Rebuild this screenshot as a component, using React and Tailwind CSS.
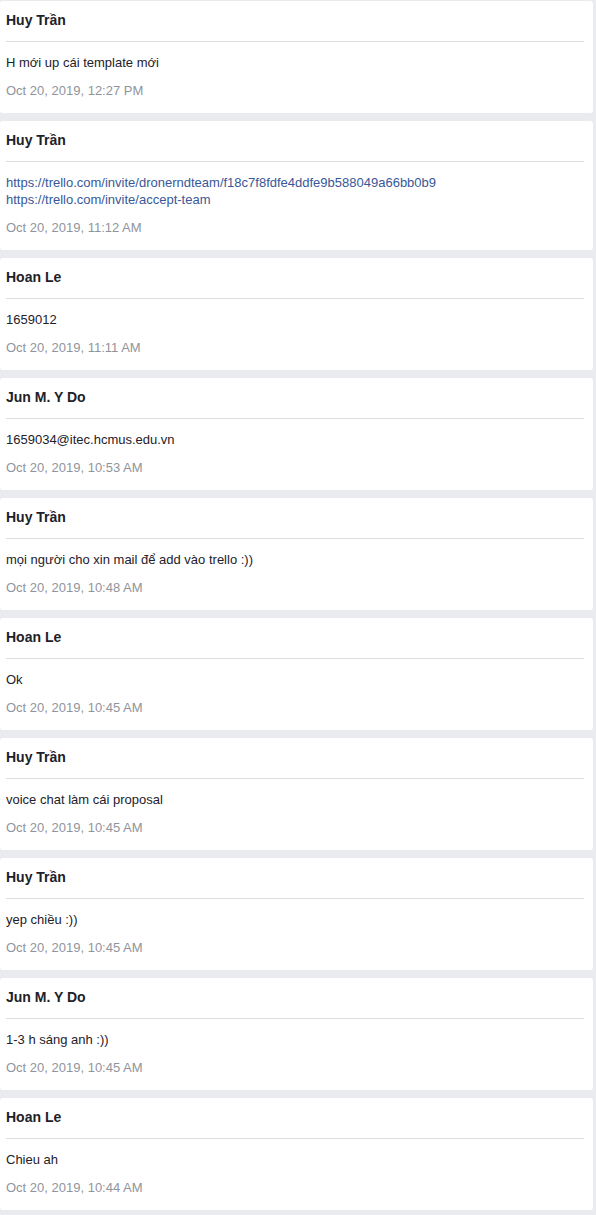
const messages = [
  { name: "Huy Trần", lines: ["H mới up cái template mới"], time: "Oct 20, 2019, 12:27 PM" },
  {
    name: "Huy Trần",
    links: [
      "https://trello.com/invite/dronerndteam/f18c7f8fdfe4ddfe9b588049a66bb0b9",
      "https://trello.com/invite/accept-team",
    ],
    time: "Oct 20, 2019, 11:12 AM",
  },
  { name: "Hoan Le", lines: ["1659012"], time: "Oct 20, 2019, 11:11 AM" },
  { name: "Jun M. Y Do", lines: ["1659034@itec.hcmus.edu.vn"], time: "Oct 20, 2019, 10:53 AM" },
  { name: "Huy Trần", lines: ["mọi người cho xin mail để add vào trello :))"], time: "Oct 20, 2019, 10:48 AM" },
  { name: "Hoan Le", lines: ["Ok"], time: "Oct 20, 2019, 10:45 AM" },
  { name: "Huy Trần", lines: ["voice chat làm cái proposal"], time: "Oct 20, 2019, 10:45 AM" },
  { name: "Huy Trần", lines: ["yep chiều :))"], time: "Oct 20, 2019, 10:45 AM" },
  { name: "Jun M. Y Do", lines: ["1-3 h sáng anh :))"], time: "Oct 20, 2019, 10:45 AM" },
  { name: "Hoan Le", lines: ["Chieu ah"], time: "Oct 20, 2019, 10:44 AM" },
];

function Card({ m }) {
  return (
    <div className="mr-[3px] rounded-[3px] bg-white pl-[6px] pr-[9px] pt-[10px] pb-[14px]">
      <div className="h-[18px] text-[14px] font-bold leading-[18px] text-[#1d2129]">{m.name}</div>
      <div className="mt-[12px] h-px bg-[#dadde1]" />
      <div className="mt-[12px] text-[13px] leading-[17px] text-[#1d2129]">
        {m.lines && m.lines.map((l, i) => <div key={i}>{l}</div>)}
        {m.links &&
          m.links.map((l, i) => (
            <div key={i}>
              <a className="text-[#385898]" href="#">
                {l}
              </a>
            </div>
          ))}
      </div>
      <div className="mt-[11px] text-[13px] leading-[17px] text-[#90949c]">{m.time}</div>
    </div>
  );
}

export default function App() {
  return (
    <div
      className="min-h-[1215px] bg-[#e9ebee] pt-px flex flex-col gap-[8px]"
      style={{ fontFamily: '"Liberation Sans", Arial, sans-serif' }}
    >
      {messages.map((m, i) => (
        <Card key={i} m={m} />
      ))}
    </div>
  );
}
